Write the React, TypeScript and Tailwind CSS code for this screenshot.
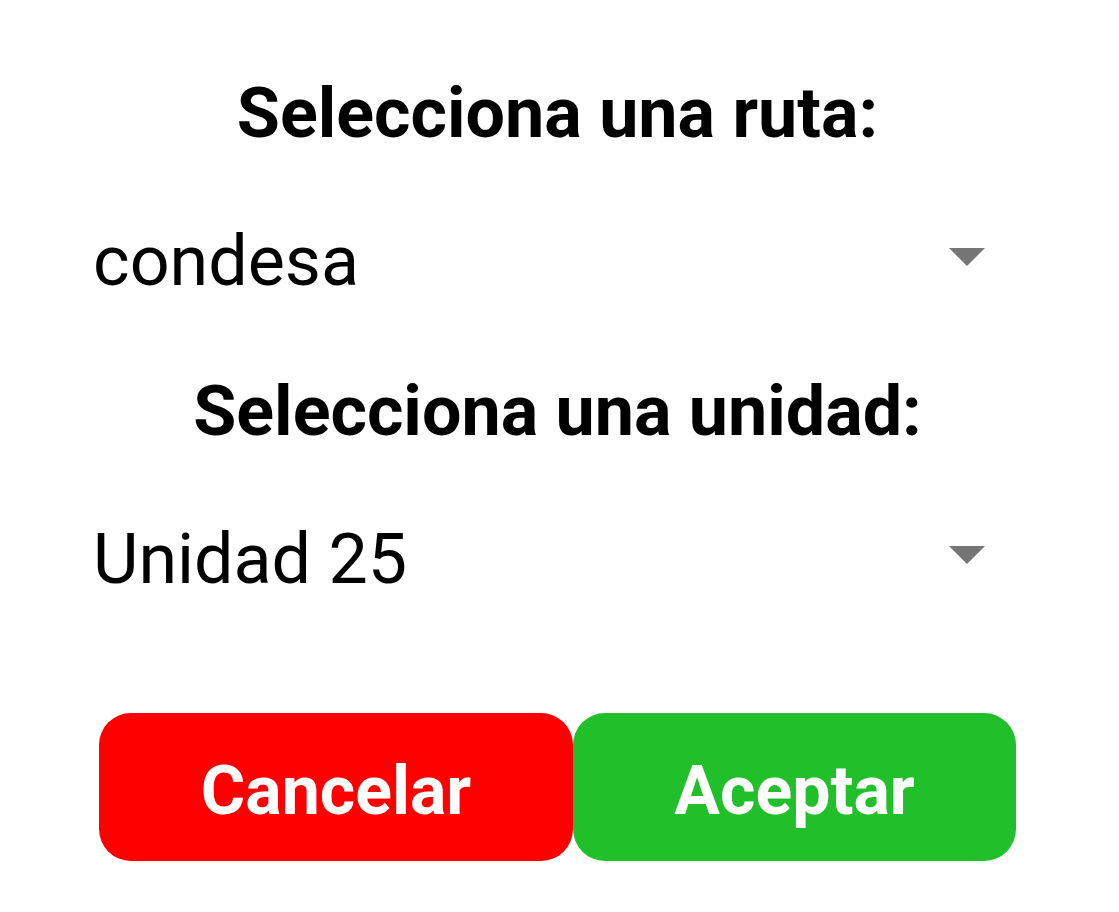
export default function App() {
  const Arrow = () => (
    <svg width="36" height="18" viewBox="0 0 36 18" className="block mt-[22px]">
      <polygon points="0,0 36,0 18,18" fill="#757575" />
    </svg>
  );
  return (
    <div
      className="w-[1119px] h-[912px] bg-white flex flex-col items-center pt-[78px] pr-[4px]"
      style={{ fontFamily: "Roboto, 'Noto Sans', sans-serif" }}
    >
      <h1 className="text-[70px] leading-none font-bold text-black">Selecciona una ruta:</h1>
      <div className="w-full mt-[78px] pl-[93px] pr-[130px] flex items-start justify-between h-[70px]">
        <span className="text-[70px] leading-none text-black">condesa</span>
        <Arrow />
      </div>
      <h1 className="mt-[80px] text-[70px] leading-none font-bold text-black">Selecciona una unidad:</h1>
      <div className="w-full mt-[78px] pl-[93px] pr-[130px] flex items-start justify-between h-[70px]">
        <span className="text-[70px] leading-none text-black">Unidad 25</span>
        <Arrow />
      </div>
      <div className="mt-[119px] flex w-[917px]">
        <button className="w-[474px] h-[148px] pt-[8px] bg-[#ff0000] rounded-[32px] text-white font-bold text-[68px] leading-none">
          Cancelar
        </button>
        <button className="w-[443px] h-[148px] pt-[8px] bg-[#21c02a] rounded-[32px] text-white font-bold text-[68px] leading-none">
          Aceptar
        </button>
      </div>
    </div>
  );
}
